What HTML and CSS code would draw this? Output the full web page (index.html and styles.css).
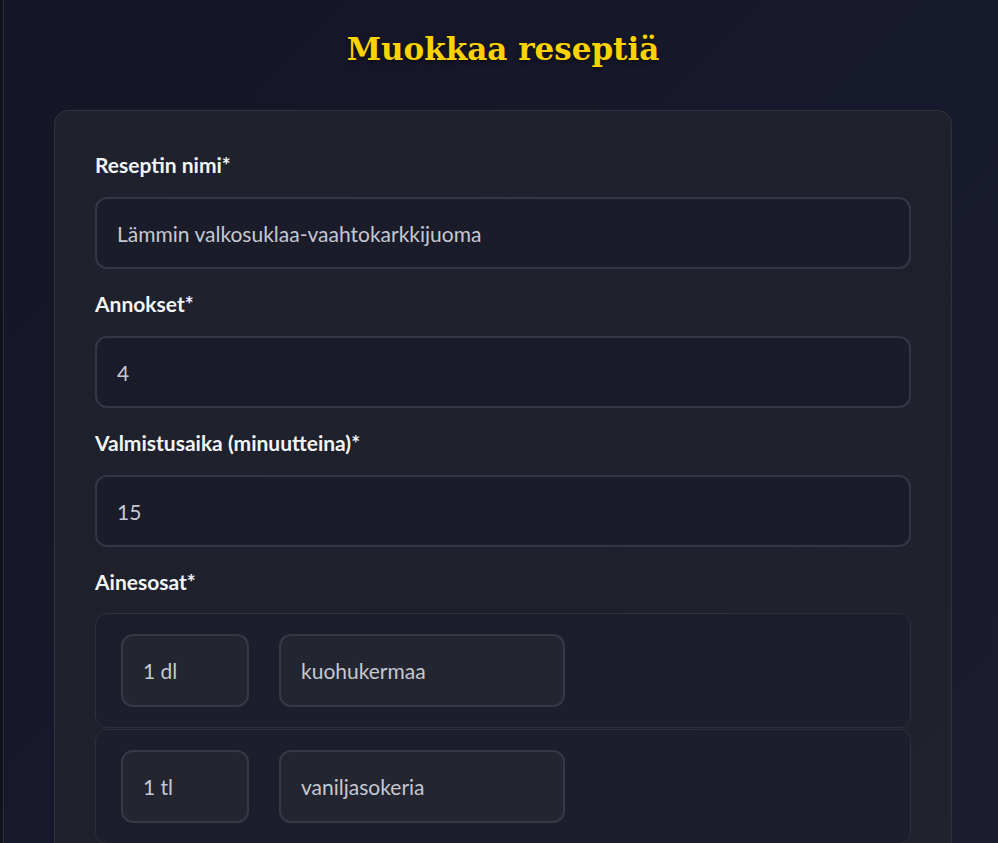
FILE: index.html
```html
<!DOCTYPE html>
<html lang="fi">
<head>
<meta charset="utf-8">
<title>Muokkaa reseptiä</title>
<link rel="stylesheet" href="styles.css">
</head>
<body>
<div class="rail"></div>
<main class="main">
  <h1 class="title">Muokkaa reseptiä</h1>
  <form class="card">
    <div class="field">
      <label class="label" for="name">Reseptin nimi*</label>
      <input class="input" id="name" type="text" value="Lämmin valkosuklaa-vaahtokarkkijuoma">
    </div>
    <div class="field">
      <label class="label" for="servings">Annokset*</label>
      <input class="input" id="servings" type="text" value="4">
    </div>
    <div class="field">
      <label class="label" for="time">Valmistusaika (minuutteina)*</label>
      <input class="input" id="time" type="text" value="15">
    </div>
    <div class="field">
      <label class="label">Ainesosat*</label>
      <div class="ingredients">
        <div class="ingredient">
          <input class="input small qty" type="text" value="1 dl">
          <input class="input small item" type="text" value="kuohukermaa">
        </div>
        <div class="ingredient">
          <input class="input small qty" type="text" value="1 tl">
          <input class="input small item" type="text" value="vaniljasokeria">
        </div>
      </div>
    </div>
  </form>
</main>
</body>
</html>
```
FILE: styles.css
```css
* { box-sizing: border-box; }

html, body {
  margin: 0;
  height: 100%;
}

body {
  display: flex;
  min-height: 843px;
  overflow: hidden;
  background: linear-gradient(135deg, #141526 0%, #171a2c 55%, #1b1d2f 100%);
  font-family: Lato, "Noto Sans", sans-serif;
}

.rail {
  width: 4px;
  flex: none;
  background: #101119;
  border-right: 1px solid #2d2f3c;
}

.main {
  flex: 1;
  display: flex;
  flex-direction: column;
  align-items: center;
  padding-left: 4px;
}

.title {
  margin: 29px 0 41px;
  font-family: "DejaVu Serif", "Liberation Serif", serif;
  font-weight: 700;
  font-size: 31px;
  line-height: 40px;
  color: #fcd200;
  text-shadow: 0 2px 4px rgba(0, 0, 0, 0.55);
}

.card {
  width: 898px;
  padding: 40px 40px 40px;
  background: linear-gradient(135deg, #1f212c 0%, #1e202c 60%, #20222d 100%);
  border: 1px solid #30323f;
  border-radius: 14px;
}

.field {
  display: flex;
  flex-direction: column;
}

.label {
  display: block;
  margin-bottom: 18px;
  font-size: 21px;
  font-weight: 700;
  line-height: 28px;
  color: #f1f5f5;
}

.input {
  display: block;
  width: 100%;
  height: 72px;
  margin: 0 0 21px;
  padding: 0 20px;
  font-family: Lato, "Noto Sans", sans-serif;
  font-size: 21px;
  color: #c6c8d1;
  background: #1b1c2a;
  border: 2px solid #343646;
  border-radius: 12px;
  outline: none;
}

.ingredients {
  display: flex;
  flex-direction: column;
  gap: 1px;
  margin-top: -1px;
}

.ingredient {
  display: flex;
  gap: 30px;
  padding: 20px 25px;
  background: #1c1e2b;
  border: 1px solid #2d2f3d;
  border-radius: 12px;
}

.input.small {
  height: 73px;
  margin: 0;
  background: #232530;
  border-color: #363846;
}

.qty { width: 128px; flex: none; }
.item { width: 286px; flex: none; }
```
